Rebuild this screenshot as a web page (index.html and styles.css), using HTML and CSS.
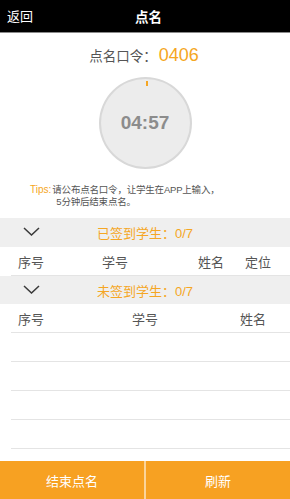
FILE: index.html
```html
<!DOCTYPE html>
<html lang="zh">
<head>
<meta charset="utf-8">
<title>点名</title>
<link rel="stylesheet" href="styles.css">
</head>
<body>
<div class="page">
  <header class="topbar">
    <span class="back">返回</span>
    <span class="title">点名</span>
  </header>

  <div class="code-row">
    <span class="code-label">点名口令：</span><span class="code-value">0406</span>
  </div>

  <div class="timer">
    <span class="tick"></span>
    <span class="timer-text">04:57</span>
  </div>

  <div class="tips">
    <span class="tips-label">Tips:</span>
    <div class="tips-body">
      <div>请公布点名口令，让学生在APP上输入，</div>
      <div class="tips-second">5分钟后结束点名。</div>
    </div>
  </div>

  <div class="section-head">
    <svg class="chevron" width="17" height="9" viewBox="0 0 17 9"><polyline points="1,1 8.5,8 16,1" fill="none" stroke="#3a3a3a" stroke-width="1.5"/></svg>
    <span class="section-title">已签到学生：0/7</span>
  </div>
  <div class="row cols-a">
    <span>序号</span><span>学号</span><span>姓名</span><span>定位</span>
  </div>

  <div class="section-head">
    <svg class="chevron" width="17" height="9" viewBox="0 0 17 9"><polyline points="1,1 8.5,8 16,1" fill="none" stroke="#3a3a3a" stroke-width="1.5"/></svg>
    <span class="section-title">未签到学生：0/7</span>
  </div>
  <div class="row cols-b">
    <span>序号</span><span>学号</span><span>姓名</span>
  </div>
  <div class="row empty"></div>
  <div class="row empty"></div>
  <div class="row empty"></div>
  <div class="row empty"></div>

  <footer class="actions">
    <div class="btn">结束点名</div>
    <div class="divider"></div>
    <div class="btn">刷新</div>
  </footer>
</div>
</body>
</html>
```

FILE: styles.css
```css
* { box-sizing: border-box; }
html, body { margin: 0; padding: 0; }
body {
  font-family: "Liberation Sans", "Noto Sans CJK SC", sans-serif;
  background: #fff;
  color: #4a4a4a;
}
.page {
  width: 290px;
  height: 499px;
  display: flex;
  flex-direction: column;
  overflow: hidden;
}
.topbar {
  height: 33px;
  flex: none;
  background: #000;
  border-bottom: 1px solid #8a8a8a;
  color: #fff;
  display: grid;
  grid-template-columns: 1fr auto 1fr;
  align-items: center;
  padding: 0 0 1px 7px;
}
.back { font-size: 13px; }
.title { font-size: 13.5px; font-weight: bold; }
.code-row {
  margin-top: 10px;
  height: 24px;
  display: flex;
  justify-content: center;
  align-items: center;
  padding-right: 2px;
}
.code-label { font-size: 13.5px; color: #555; }
.code-value { font-size: 18px; color: #f5a623; margin-left: 2px; }
.timer {
  position: relative;
  margin: 10px auto 0;
  width: 93px;
  height: 92px;
  border-radius: 50%;
  border: 2px solid #d8d8d8;
  background: #ececec;
  display: flex;
  align-items: center;
  justify-content: center;
  flex: none;
}
.tick {
  position: absolute;
  top: 2px;
  left: 45px;
  width: 2px;
  height: 5px;
  background: #f5a623;
}
.timer-text {
  font-size: 19px;
  font-weight: bold;
  color: #8c8c8c;
  margin-top: -1px;
}
.tips {
  margin-top: 15px;
  padding-left: 30px;
  display: flex;
  font-size: 10px;
  line-height: 12px;
  color: #555;
}
.tips-label { color: #f5a623; margin-right: 1px; }
.tips-body { font-size: 9.5px; letter-spacing: -0.2px; }
.tips-second { padding-left: 4px; }
.section-head {
  height: 29px;
  flex: none;
  background: #efefef;
  display: flex;
  align-items: center;
  padding-left: 23px;
}
.tips + .section-head { margin-top: 10px; }
.row + .section-head { height: 28px; }
.chevron { display: block; margin-top: -2px; }
.section-title {
  margin-left: 57px;
  font-size: 13px;
  color: #f5a623;
}
.row {
  height: 29px;
  flex: none;
  margin-left: 11px;
  padding-left: 7px;
  border-bottom: 1px solid #e4e4e4;
  display: grid;
  align-items: center;
  font-size: 13px;
  color: #555;
}
.cols-a { grid-template-columns: 84px 96px 47px auto; }
.cols-b { grid-template-columns: 114px 108px auto; }
.actions {
  margin-top: auto;
  height: 38px;
  flex: none;
  display: flex;
  background: #f7a122;
}
.btn {
  flex: 1;
  display: flex;
  align-items: center;
  justify-content: center;
  color: #fff;
  font-size: 13px;
}
.divider {
  width: 2px;
  background: #fbd49a;
}
```
